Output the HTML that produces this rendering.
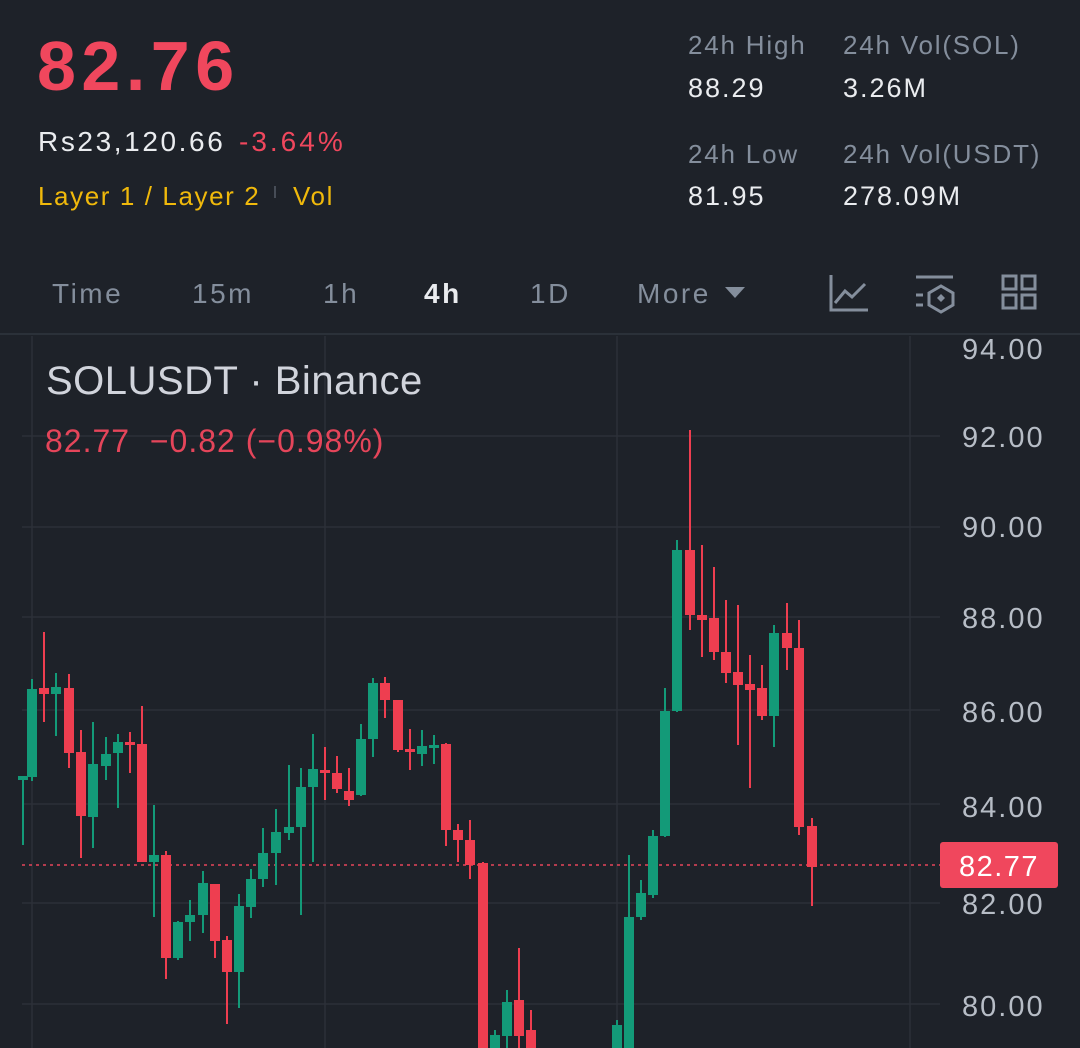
<!DOCTYPE html>
<html><head><meta charset="utf-8"><style>
body{margin:0;width:1080px;height:1048px;background:#1e2229;overflow:hidden;font-family:"Liberation Sans",sans-serif;position:relative}
.a{position:absolute;white-space:nowrap}
.t{font-size:28px;letter-spacing:2.5px}
.h{font-size:26px;letter-spacing:1.8px;color:#848e9c}
.v{font-size:27px;letter-spacing:2px;color:#eaecef}
</style></head><body>
<div class="a" style="left:37px;top:26px;font-size:70px;font-weight:bold;color:#f0475d;letter-spacing:5.5px">82.76</div>
<div class="a" style="left:38px;top:126px;font-size:28px;color:#eaecef;letter-spacing:2.6px">Rs23,120.66</div>
<div class="a" style="left:239px;top:126px;font-size:28px;color:#f0475d;letter-spacing:3px">-3.64%</div>
<div class="a" style="left:38px;top:181px;font-size:26px;color:#f0b90b;letter-spacing:1.6px">Layer 1 / Layer 2</div>
<div class="a" style="left:274px;top:186px;width:2px;height:12px;background:#474d57"></div>
<div class="a" style="left:293px;top:181px;font-size:26px;color:#f0b90b;letter-spacing:1.6px">Vol</div>
<div class="a h" style="left:688px;top:30px">24h High</div>
<div class="a v" style="left:688px;top:73px">88.29</div>
<div class="a h" style="left:843px;top:30px">24h Vol(SOL)</div>
<div class="a v" style="left:843px;top:73px">3.26M</div>
<div class="a h" style="left:688px;top:139px">24h Low</div>
<div class="a v" style="left:688px;top:181px">81.95</div>
<div class="a h" style="left:843px;top:139px">24h Vol(USDT)</div>
<div class="a v" style="left:843px;top:181px">278.09M</div>
<div class="a t" style="left:52px;top:278px;color:#848e9c">Time</div>
<div class="a t" style="left:192px;top:278px;color:#848e9c">15m</div>
<div class="a t" style="left:323px;top:278px;color:#848e9c">1h</div>
<div class="a t" style="left:424px;top:278px;color:#eaecef;font-weight:bold">4h</div>
<div class="a t" style="left:530px;top:278px;color:#848e9c">1D</div>
<div class="a t" style="left:637px;top:278px;color:#848e9c">More</div>
<svg class="a" style="left:0;top:0" width="1080" height="1048">
<path d="M725 287h20l-10 11z" fill="#848e9c"/>
<g stroke="#848e9c" stroke-width="3" fill="none">
<path d="M831 275v35h37M835 303l10-12 7 6 13-13"/>
<path d="M916 277h37M916 295h7M916 305h7"/>
<path d="M941 286l12 7v12l-12 7-12-7v-12z"/>
<rect x="1003" y="276" width="13" height="13"/><rect x="1022" y="276" width="13" height="13"/>
<rect x="1003" y="295" width="13" height="13"/><rect x="1022" y="295" width="13" height="13"/>
</g>
<path d="M941 294l4 4-4 4-4-4z" fill="#848e9c"/>
<line x1="0" y1="334" x2="1080" y2="334" stroke="#2b3139" stroke-width="2"/>
<g stroke="#2c3038" stroke-width="1.5">
<line x1="22" y1="436" x2="940" y2="436"/><line x1="22" y1="527" x2="940" y2="527"/><line x1="22" y1="617" x2="940" y2="617"/><line x1="22" y1="710" x2="940" y2="710"/><line x1="22" y1="804" x2="940" y2="804"/><line x1="22" y1="903" x2="940" y2="903"/><line x1="22" y1="1004" x2="940" y2="1004"/>
<line x1="32" y1="336" x2="32" y2="1048"/><line x1="325" y1="336" x2="325" y2="1048"/><line x1="617" y1="336" x2="617" y2="1048"/><line x1="910" y1="336" x2="910" y2="1048"/>
</g>
<line x1="22" y1="865" x2="940" y2="865" stroke="#e5455a" stroke-width="1.5" stroke-dasharray="3 4"/>
<g id="c"></g>
<rect x="940" y="842" width="118" height="46" rx="3" fill="#f0475d"/>
<text x="999" y="876" font-size="29" fill="#fff" text-anchor="middle" font-family="Liberation Sans" letter-spacing="1.5">82.77</text>
<g font-size="29" fill="#b7bdc6" font-family="Liberation Sans" letter-spacing="2">
<text x="962" y="359">94.00</text><text x="962" y="447">92.00</text><text x="962" y="537">90.00</text><text x="962" y="628">88.00</text><text x="962" y="722">86.00</text><text x="962" y="817">84.00</text><text x="962" y="914">82.00</text><text x="962" y="1016">80.00</text>
</g>
<text x="46" y="394" font-size="40" fill="#d1d4dc" font-family="Liberation Sans" letter-spacing="0.5">SOLUSDT · Binance</text>
<text x="45" y="452" font-size="32" fill="#e5455a" font-family="Liberation Sans" letter-spacing="1" xml:space="preserve" style="white-space:pre">82.77  −0.82 (−0.98%)</text>
</svg>
<script>
var d=[[23,'g',776,780,776,845],[32,'g',689,777,679,781],[44,'r',688,694,632,722],[56,'g',687,694,673,736],[69,'r',688,753,674,768],[81,'r',752,816,730,858],[93,'g',764,817,722,848],[106,'g',754,766,737,780],[118,'g',742,753,734,808],[130,'r',742,745,732,773],[142,'r',744,862,706,862],[154,'g',855,862,805,917],[166,'r',855,958,851,979],[178,'g',922,958,921,960],[190,'g',915,922,900,941],[203,'g',883,915,871,933],[215,'r',884,941,884,958],[227,'r',940,972,936,1024],[239,'g',906,972,894,1008],[251,'g',879,907,869,918],[263,'g',853,879,828,887],[276,'g',832,853,809,885],[289,'g',827,833,765,840],[301,'g',787,827,768,915],[313,'g',769,787,734,862],[325,'r',770,773,747,800],[337,'r',773,789,756,793],[349,'r',791,800,768,806],[361,'g',739,795,724,796],[373,'g',683,739,678,757],[385,'r',683,700,677,718],[398,'r',700,750,700,752],[410,'r',749,752,729,770],[422,'g',746,754,730,766],[434,'g',745,747,735,764],[446,'r',744,830,743,846],[458,'r',830,840,824,862],[470,'r',840,865,820,879],[483,'r',863,1048,862,1048],[495,'g',1035,1048,1030,1048],[507,'g',1002,1036,990,1048],[519,'r',1000,1036,948,1048],[531,'r',1030,1048,1010,1048],[617,'g',1025,1048,1020,1048],[629,'g',917,1048,855,1048],[641,'g',893,917,880,920],[653,'g',836,895,830,898],[665,'g',711,836,688,837],[677,'g',550,711,540,712],[690,'r',550,615,430,630],[702,'r',615,620,545,657],[714,'r',618,652,567,660],[726,'r',652,673,600,683],[738,'r',672,685,605,745],[750,'r',684,690,655,788],[762,'r',688,716,665,720],[774,'g',633,716,625,747],[787,'r',633,648,603,670],[799,'r',648,827,620,835],[812,'r',826,867,818,906]];
var s='';d.forEach(function(c){var col=c[1]=='g'?'#139a78':'#ee3e50';s+='<line x1="'+c[0]+'" x2="'+c[0]+'" y1="'+c[4]+'" y2="'+c[5]+'" stroke="'+col+'" stroke-width="2"/><rect x="'+(c[0]-5)+'" y="'+c[2]+'" width="10" height="'+Math.max(3,c[3]-c[2])+'" fill="'+col+'"/>';});
document.getElementById('c').innerHTML=s;
</script>
</body></html>
